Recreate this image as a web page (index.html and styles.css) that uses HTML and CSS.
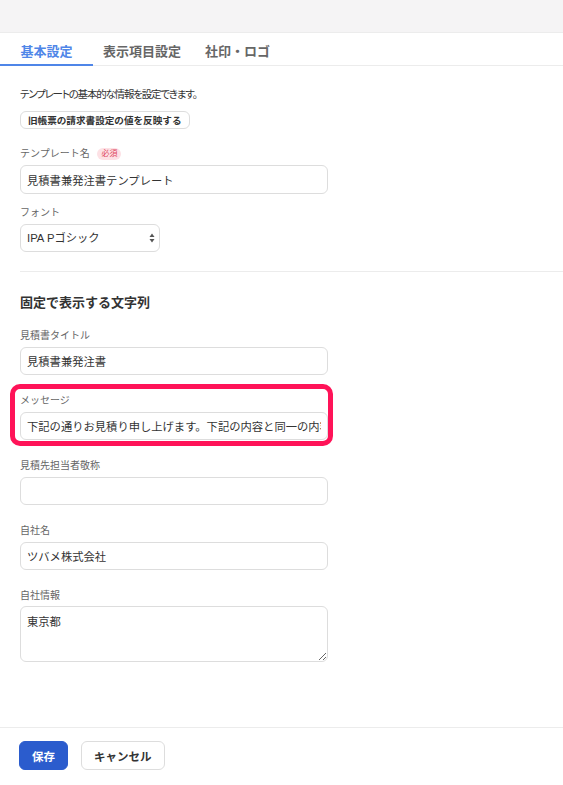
FILE: index.html
```html
<!DOCTYPE html>
<html lang="ja">
<head>
    <meta charset="UTF-8">
    <meta name="viewport" content="width=device-width, initial-scale=1.0">
    <title>テンプレート設定</title>
    <link rel="stylesheet" href="styles.css">
</head>
<body>
    <div class="page">
        <div class="topbar"></div>

        <div class="tabs">
            <div class="tab active">基本設定</div>
            <div class="tab">表示項目設定</div>
            <div class="tab">社印・ロゴ</div>
        </div>

        <div class="content">
            <p class="description">テンプレートの基本的な情報を設定できます。</p>
            <button class="small-button">旧帳票の請求書設定の値を反映する</button>

            <div class="field first">
                <label class="label">テンプレート名 <span class="badge">必須</span></label>
                <input class="input" type="text" value="見積書兼発注書テンプレート">
            </div>

            <div class="field tight">
                <label class="label">フォント</label>
                <div class="select-wrap">
                    <select class="select">
                        <option>IPA Pゴシック</option>
                    </select>
                    <svg class="select-icon" width="6" height="10" viewBox="0 0 6 10">
                        <path d="M3 0.5 L5.5 4 L0.5 4 Z" fill="#555"/>
                        <path d="M3 9.5 L5.5 6 L0.5 6 Z" fill="#555"/>
                    </svg>
                </div>
            </div>

            <hr class="divider">

            <h2 class="section-title">固定で表示する文字列</h2>

            <div class="field">
                <label class="label">見積書タイトル</label>
                <input class="input" type="text" value="見積書兼発注書">
            </div>

            <div class="field highlighted">
                <label class="label">メッセージ</label>
                <input class="input" type="text" value="下記の通りお見積り申し上げます。下記の内容と同一の内容で発注いたします。">
                <div class="highlight"></div>
            </div>

            <div class="field">
                <label class="label">見積先担当者敬称</label>
                <input class="input" type="text" value="">
            </div>

            <div class="field">
                <label class="label">自社名</label>
                <input class="input" type="text" value="ツバメ株式会社">
            </div>

            <div class="field">
                <label class="label">自社情報</label>
                <textarea class="textarea">東京都</textarea>
            </div>
        </div>

        <div class="footer">
            <button class="btn primary">保存</button>
            <button class="btn">キャンセル</button>
        </div>
    </div>
</body>
</html>
```

FILE: styles.css
```css
:root {
    --primary: #2b5ccd;
    --tab-active: #4f86e8;
    --text: #333333;
    --text-light: #666666;
    --border: #dddddd;
    --line: #ececec;
    --alert: #ff1358;
}

* {
    box-sizing: border-box;
}

body {
    margin: 0;
    font-family: "Liberation Sans", "Noto Sans CJK JP", sans-serif;
    color: var(--text);
    background: #ffffff;
}

.page {
    display: flex;
    flex-direction: column;
    height: 785px;
}

.topbar {
    height: 33px;
    background: #f5f4f5;
    border-bottom: 1px solid var(--line);
}

.tabs {
    display: flex;
    height: 33px;
    border-bottom: 1px solid var(--line);
}

.tab {
    padding: 10px 12px 0;
    line-height: 18px;
    font-size: 13px;
    font-weight: bold;
    color: var(--text-light);
    border-bottom: 2px solid transparent;
    margin-bottom: -1px;
}

.tab.active {
    width: 93px;
    padding: 10px 0 0;
    text-align: center;
    color: var(--tab-active);
    border-bottom-color: var(--tab-active);
}

.tab.active + .tab {
    padding-left: 10px;
}

.content {
    padding-left: 20px;
}

.description {
    margin: 20px 0 0;
    font-size: 10.5px;
    line-height: 16px;
    letter-spacing: -1.2px;
    font-feature-settings: "palt";
    color: var(--text);
}

.small-button {
    display: block;
    margin-top: 9px;
    height: 18px;
    padding: 0 7px;
    font-family: inherit;
    font-size: 9.6px;
    font-weight: bold;
    color: var(--text);
    background: #ffffff;
    border: 1px solid var(--border);
    border-radius: 6px;
}

.field {
    width: 308px;
    margin-top: 18px;
    position: relative;
}

.field.first {
    margin-top: 17px;
}

.field.tight {
    margin-top: 11px;
}

.label {
    display: block;
    font-size: 10px;
    line-height: 16px;
    color: var(--text-light);
    margin-bottom: 3px;
}

.badge {
    display: inline-block;
    margin-left: 5px;
    padding: 0 4px;
    font-size: 8px;
    line-height: 12px;
    color: #e0485f;
    background: #fde1e5;
    border-radius: 6px;
    vertical-align: 1px;
}

.input,
.select,
.textarea {
    display: block;
    width: 100%;
    height: 28px;
    padding: 0 6px;
    font-family: inherit;
    font-size: 11.3px;
    color: var(--text);
    background: #ffffff;
    border: 1px solid var(--border);
    border-radius: 6px;
    outline: none;
}

.field.first .input {
    height: 29px;
}

.select-wrap {
    position: relative;
    width: 140px;
}

.select {
    appearance: none;
    -webkit-appearance: none;
}

.select-icon {
    position: absolute;
    right: 5px;
    top: 9px;
}

.textarea {
    height: 56px;
    padding: 6px 6px;
    resize: vertical;
}

.field:last-child .label {
    margin-bottom: 2px;
}

.divider {
    margin: 19px 0 0;
    border: none;
    border-top: 1px solid var(--line);
}

.section-title {
    margin: 21px 0 0;
    font-size: 13px;
    line-height: 20px;
    font-weight: bold;
    color: var(--text);
}

.section-title + .field {
    margin-top: 15px;
}

.highlight {
    position: absolute;
    left: -10px;
    top: -9px;
    right: -5px;
    bottom: -6px;
    border: 5px solid var(--alert);
    border-radius: 10px;
    pointer-events: none;
}

.footer {
    margin-top: auto;
    display: flex;
    gap: 13px;
    padding: 13px 0 15px 19px;
    border-top: 1px solid var(--line);
}

.btn {
    height: 29px;
    padding: 0 12px;
    font-family: inherit;
    font-size: 11.5px;
    font-weight: bold;
    color: var(--text);
    background: #ffffff;
    border: 1px solid var(--border);
    border-radius: 6px;
}

.btn.primary {
    width: 49px;
    padding: 0;
    color: #ffffff;
    background: var(--primary);
    border-color: var(--primary);
}
```
